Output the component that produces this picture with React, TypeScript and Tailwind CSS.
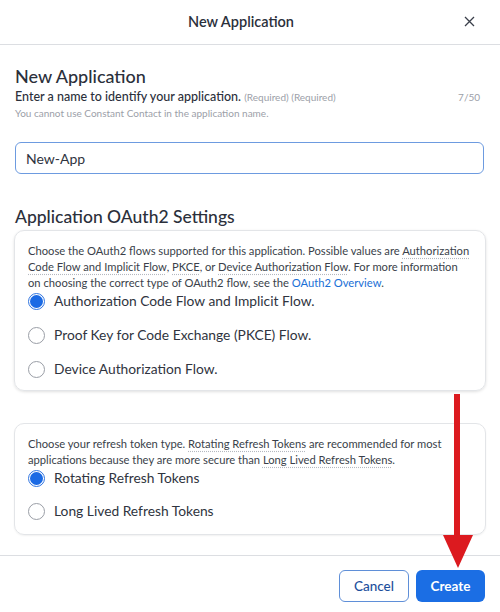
import { useState } from 'react';

const font = { fontFamily: 'Lato, "Noto Sans", sans-serif' };

function Radio({ checked, label, onClick }: { checked: boolean; label: string; onClick: () => void }) {
  return (
    <button type="button" onClick={onClick} className="flex h-[20px] items-center gap-[9px] text-left">
      {checked ? (
        <span className="flex h-[17px] w-[17px] items-center justify-center rounded-full border border-[#2f74e0] bg-white">
          <span className="h-[13px] w-[13px] rounded-full bg-[#1b6ae4]" />
        </span>
      ) : (
        <span className="h-[17px] w-[17px] rounded-full border-[1.5px] border-[#9a9ea6] bg-white" />
      )}
      <span className="text-[13.8px] text-[#2f3440]">{label}</span>
    </button>
  );
}

const dotted = 'underline decoration-dotted decoration-[#b5b9c0] underline-offset-[3px]';

export default function App() {
  const [name, setName] = useState('New-App');
  const [flow, setFlow] = useState(0);
  const [refresh, setRefresh] = useState(0);

  const flows = [
    'Authorization Code Flow and Implicit Flow.',
    'Proof Key for Code Exchange (PKCE) Flow.',
    'Device Authorization Flow.',
  ];
  const tokens = ['Rotating Refresh Tokens', 'Long Lived Refresh Tokens'];

  return (
    <div className="relative flex h-[612px] w-[500px] flex-col bg-white text-[#2f3440]" style={font}>
      {/* header */}
      <div className="relative flex h-[45px] shrink-0 items-center justify-center border-b border-[#dcdee2] pr-[18px]">
        <span className="text-[14.5px] font-semibold text-[#2b303b]">New Application</span>
        <button type="button" className="absolute right-[25px] top-[16px] text-[#3a3f4a]">
          <svg width="11" height="11" viewBox="0 0 11 11" fill="none" stroke="currentColor" strokeWidth="1.3">
            <path d="M1 1l9 9M10 1l-9 9" />
          </svg>
        </button>
      </div>

      {/* body */}
      <div className="flex flex-1 flex-col px-[15px] pt-[19px]">
        <h2 className="text-[18px] font-medium leading-[24px] text-[#2b303b]">New Application</h2>
        <div className="mt-px flex items-center justify-between leading-[16px]">
          <p className="text-[12.5px] font-medium text-[#2b303b]">
            Enter a name to identify your application.{' '}
            <span className="text-[10px] font-normal text-[#9ca0a8]">(Required) (Required)</span>
          </p>
          <span className="pr-[5px] text-[10px] text-[#9ca0a8]">{name.length}/50</span>
        </div>
        <p className="text-[10px] leading-[16px] text-[#9ca0a8]">
          You cannot use Constant Contact in the application name.
        </p>

        <input
          value={name}
          onChange={(e) => setName(e.target.value.slice(0, 50))}
          className="mt-[21px] h-[32px] w-[469px] rounded-[6px] border border-[#6d9be0] px-[10px] text-[14px] text-[#2f3440] outline-none"
          style={font}
        />

        <h2 className="mt-[31px] text-[17.5px] font-medium leading-[24px] text-[#2b303b]">
          Application OAuth2 Settings
        </h2>

        <div className="mt-px w-[472px] -ml-px rounded-[10px] border border-[#e3e5e8] px-[13px] pb-[11px] pt-[12px] shadow-[0_1px_3px_rgba(0,0,0,0.12)]">
          <p className="whitespace-nowrap text-[11.2px] leading-[16px] text-[#3a3f4a]">
            Choose the OAuth2 flows supported for this application. Possible values are{' '}
            <span className={dotted}>Authorization</span>
            <br />
            <span className={dotted}>Code Flow and Implicit Flow</span>, <span className={dotted}>PKCE</span>, or{' '}
            <span className={dotted}>Device Authorization Flow</span>. For more information
            <br />
            on choosing the correct type of OAuth2 flow, see the <a className="text-[#1a6fd6]">OAuth2 Overview</a>.
          </p>
          <div className="flex flex-col gap-[14px]">
            {flows.map((f, i) => (
              <Radio key={f} checked={flow === i} label={f} onClick={() => setFlow(i)} />
            ))}
          </div>
        </div>

        <div className="mt-[32px] w-[472px] -ml-px rounded-[10px] border border-[#e3e5e8] px-[13px] pb-[13px] pt-[12px] shadow-[0_1px_2px_rgba(0,0,0,0.06)]">
          <p className="whitespace-nowrap text-[11.2px] leading-[16px] text-[#3a3f4a]">
            Choose your refresh token type. <span className={dotted}>Rotating Refresh Tokens</span> are
            recommended for most
            <br />
            applications because they are more secure than <span className={dotted}>Long Lived Refresh Tokens</span>.
          </p>
          <div className="flex flex-col gap-[13px]">
            {tokens.map((t, i) => (
              <Radio key={t} checked={refresh === i} label={t} onClick={() => setRefresh(i)} />
            ))}
          </div>
        </div>
      </div>

      {/* footer */}
      <div className="flex h-[57px] shrink-0 items-start justify-end gap-[7px] border-t border-[#dcdee2] px-[15px] pt-[14px]">
        <button
          type="button"
          className="h-[32px] w-[70px] rounded-[6px] border border-[#5f8fd8] text-[13.5px] font-medium text-[#1d4f9c]"
        >
          Cancel
        </button>
        <button type="button" className="h-[32px] w-[69px] rounded-[6px] bg-[#1b6ee4] text-[13.5px] font-bold text-white">
          Create
        </button>
      </div>

      {/* red annotation arrow */}
      <svg className="pointer-events-none absolute left-0 top-0" width="500" height="612">
        <rect x="454" y="394" width="6" height="145" fill="#dc1a1f" />
        <polygon points="443,535 473,535 458,568" fill="#dc1a1f" />
      </svg>
    </div>
  );
}
